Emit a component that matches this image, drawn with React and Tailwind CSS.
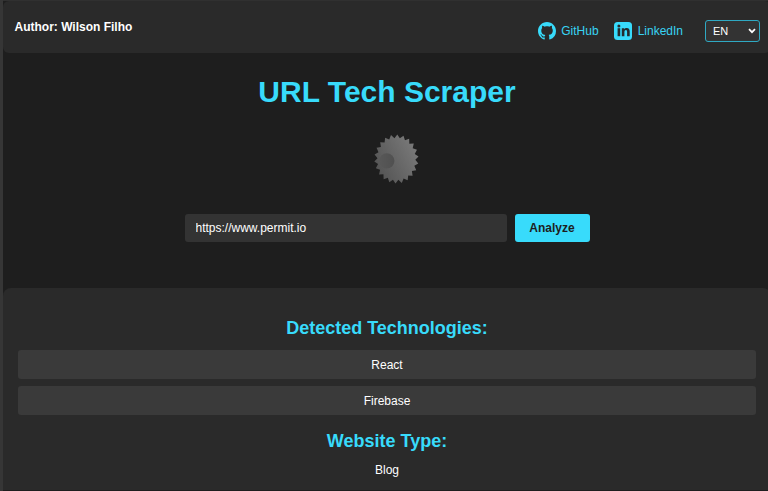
import { BsGithub } from "react-icons/bs";

const TEETH = 22;

function gearPoints() {
  const points = [];
  for (let i = 0; i < TEETH * 2; i++) {
    const angle = (Math.PI * i) / TEETH - Math.PI / 2 + 0.04;
    const scale = i % 2 === 0 ? 1.01 : 0.86;
    points.push(
      `${(24.4 + 22 * scale * Math.cos(angle)).toFixed(2)},${(25 + 24.4 * scale * Math.sin(angle)).toFixed(2)}`
    );
  }
  return points.join(" ");
}

function Gear() {
  return (
    <svg width="50" height="50" viewBox="0 0 50 50" className="ml-[19px]">
      <defs>
        <linearGradient id="gear" x1="0" y1="0.8" x2="1" y2="0.2">
          <stop offset="0" stopColor="#515151" />
          <stop offset="1" stopColor="#7c7c7c" />
        </linearGradient>
        <linearGradient id="hub" x1="0" y1="0" x2="1" y2="0">
          <stop offset="0" stopColor="#585858" />
          <stop offset="1" stopColor="#505050" />
        </linearGradient>
      </defs>
      <polygon points={gearPoints()} fill="url(#gear)" />
      <circle cx="14.8" cy="26.8" r="7.6" fill="url(#hub)" />
    </svg>
  );
}

function LinkedInIcon() {
  return (
    <svg width="18" height="18" viewBox="0 0 18 18">
      <rect width="18" height="18" rx="3.5" fill="#38dbfb" />
      <g fill="#242c2e">
        <circle cx="4.9" cy="3.9" r="1.5" />
        <rect x="3.6" y="6.2" width="2.6" height="8" />
        <path d="M7.8 6.2h2.5v1c.5-.8 1.3-1.3 2.4-1.3 2.3 0 3 1.5 3 3.6v4.7h-2.6v-4.1c0-1.2-.2-2-1.2-2s-1.5.8-1.5 1.9v4.2H7.8z" />
      </g>
    </svg>
  );
}

function Header() {
  return (
    <header className="mt-px flex h-[52px] w-[768px] justify-between rounded-md bg-[#2a2a2a] pr-[11px] pl-[11.5px]">
      <strong className="mt-[17px] leading-[18px]">Author: Wilson Filho</strong>
      <div className="mt-[19px] flex h-[22px] items-center text-[#38d4f4]">
        <a className="flex items-center gap-[5.5px]">
          <BsGithub size={18} color="#38dbfb" />
          GitHub
        </a>
        <a className="ml-[15px] flex items-center gap-[6px]">
          <LinkedInIcon />
          LinkedIn
        </a>
        <button className="ml-[22px] flex h-[22px] w-[55px] items-center justify-between rounded-[3px] border border-[#2fa9c3] bg-[#333] pr-[3px] pl-[7px] text-[11px] text-white">
          EN
          <svg width="8" height="6" viewBox="0 0 8 6" fill="none" stroke="white" strokeWidth="1.7">
            <path d="M1 1.2 4 4.2 7 1.2" />
          </svg>
        </button>
      </div>
    </header>
  );
}

function Results() {
  return (
    <section className="mt-[45px] flex h-[203px] w-[768px] flex-col items-center rounded-t-lg bg-[#2a2a2a] px-[15px] pt-[29px]">
      <h2 className="text-[18px] leading-[22px] font-bold text-[#38dbfb]">Detected Technologies:</h2>
      <ul className="mt-[11px] flex w-full flex-col gap-[7px] text-center">
        {["React", "Firebase"].map((name) => (
          <li key={name} className="h-[29px] rounded-[3px] bg-[#3a3a3a] pt-px leading-[29px]">
            {name}
          </li>
        ))}
      </ul>
      <h2 className="mt-[15px] text-[18px] leading-[22px] font-bold text-[#38dbfb]">Website Type:</h2>
      <p className="mt-[9px] leading-[18px]">Blog</p>
    </section>
  );
}

export default function App() {
  return (
    <div className="h-[491px] w-[768px] overflow-hidden border-l-[3px] border-[#363636] bg-[#1e1e1e] font-['Liberation_Sans',Arial,sans-serif] text-[12px] text-white">
      <div className="flex h-[490px] w-[768px] flex-col items-center border-t border-[#303030]">
        <div className="-mt-px">
          <Header />
        </div>
        <h1 className="mt-[21px] text-[30px] leading-[36px] font-bold text-[#38dbfb]">URL Tech Scraper</h1>
        <div className="mt-[24px]">
          <Gear />
        </div>
        <form className="mt-[30px] flex h-[29px] items-start gap-[7.5px]">
          <input
            defaultValue="https://www.permit.io"
            className="h-[28.4px] w-[322.5px] rounded-[3px] bg-[#333] px-[11px]"
          />
          <button
            type="button"
            className="h-[28.4px] w-[75px] rounded-[3px] bg-[#38dbfb] font-bold text-[#1e1e1e]"
          >
            Analyze
          </button>
        </form>
        <Results />
      </div>
    </div>
  );
}
